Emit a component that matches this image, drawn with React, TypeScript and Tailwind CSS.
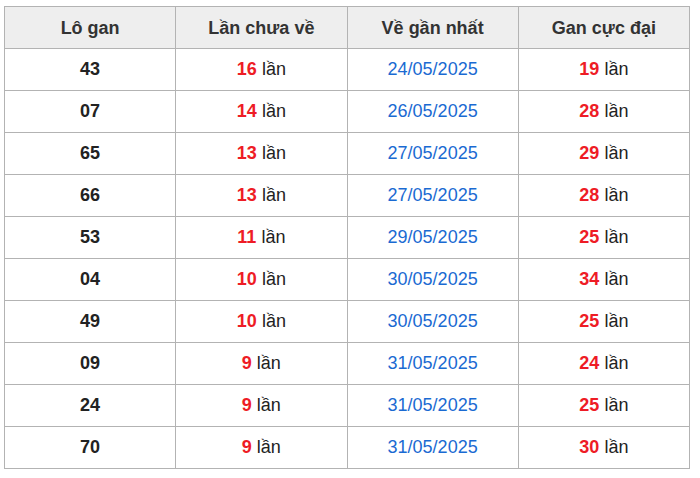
import React from "react";

const rows: [string, string, string, string][] = [
  ["43", "16", "24/05/2025", "19"],
  ["07", "14", "26/05/2025", "28"],
  ["65", "13", "27/05/2025", "29"],
  ["66", "13", "27/05/2025", "28"],
  ["53", "11", "29/05/2025", "25"],
  ["04", "10", "30/05/2025", "34"],
  ["49", "10", "30/05/2025", "25"],
  ["09", "9", "31/05/2025", "24"],
  ["24", "9", "31/05/2025", "25"],
  ["70", "9", "31/05/2025", "30"],
];

export default function App() {
  return (
    <div className="w-[700px] h-[478px] bg-white pt-[6px] pl-[4px]" style={{ fontFamily: '"Liberation Sans", Arial, sans-serif' }}>
      <table className="w-[686px] table-fixed border-collapse text-[18px] leading-none">
        <thead>
          <tr className="h-[42px] bg-[#eeeeee] text-[#333333] font-bold">
            <th className="border border-[#b3b3b3] font-bold">Lô gan</th>
            <th className="border border-[#b3b3b3] font-bold">Lần chưa về</th>
            <th className="border border-[#b3b3b3] font-bold">Về gần nhất</th>
            <th className="border border-[#b3b3b3] font-bold">Gan cực đại</th>
          </tr>
        </thead>
        <tbody>
          {rows.map((r, i) => (
            <tr key={i} className="h-[42px] text-center">
              <td className="border border-[#b3b3b3] font-bold text-[#222222] pb-[2px]">{r[0]}</td>
              <td className="border border-[#b3b3b3] text-[#222222] pb-[2px]">
                <span className="font-bold text-[#ee1c25]">{r[1]}</span> lần
              </td>
              <td className="border border-[#b3b3b3] text-[#1a6ad2] pb-[2px]">{r[2]}</td>
              <td className="border border-[#b3b3b3] text-[#222222] pb-[2px]">
                <span className="font-bold text-[#ee1c25]">{r[3]}</span> lần
              </td>
            </tr>
          ))}
        </tbody>
      </table>
    </div>
  );
}
